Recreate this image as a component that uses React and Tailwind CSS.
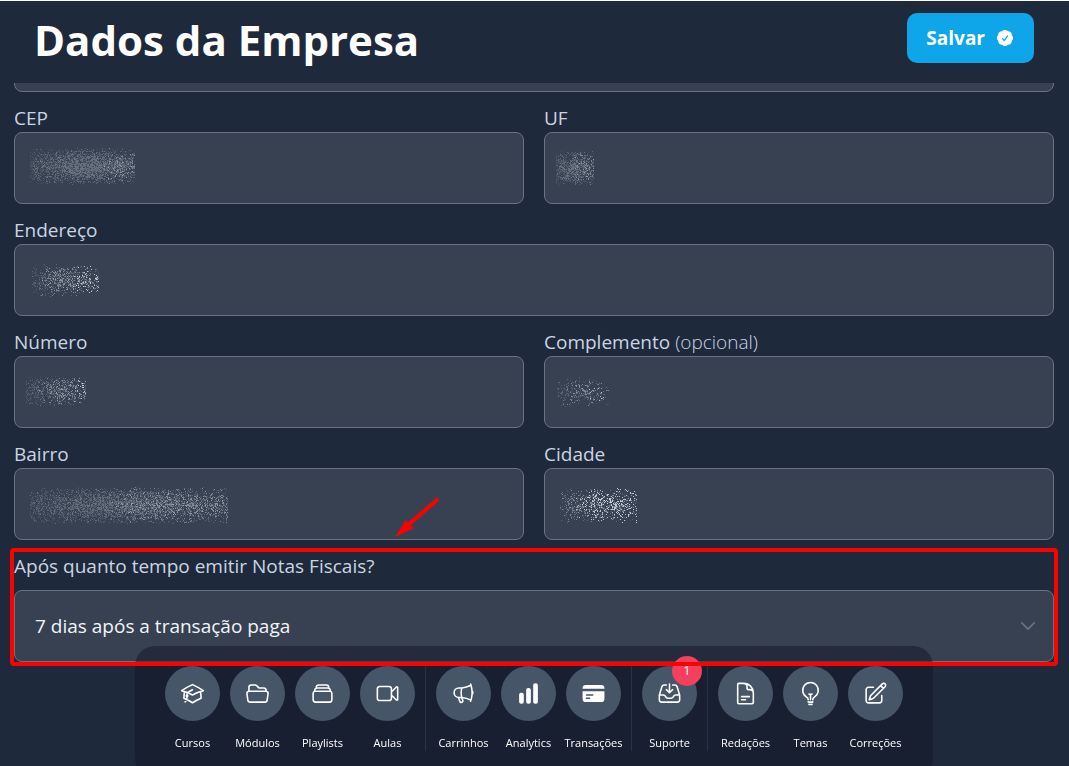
import {
  HiChartBar,
  HiCheckBadge,
  HiCreditCard,
  HiOutlineAcademicCap,
  HiOutlineChevronDown,
  HiOutlineDocumentText,
  HiOutlineFolderOpen,
  HiOutlineInboxArrowDown,
  HiOutlineLightBulb,
  HiOutlineMegaphone,
  HiOutlinePencilSquare,
  HiOutlineRectangleStack,
  HiOutlineVideoCamera,
} from "react-icons/hi2";

const dockGroups = [
  [
    { label: "Cursos", Icon: HiOutlineAcademicCap },
    { label: "Módulos", Icon: HiOutlineFolderOpen },
    { label: "Playlists", Icon: HiOutlineRectangleStack },
    { label: "Aulas", Icon: HiOutlineVideoCamera },
  ],
  [
    { label: "Carrinhos", Icon: HiOutlineMegaphone },
    { label: "Analytics", Icon: HiChartBar },
    { label: "Transações", Icon: HiCreditCard },
  ],
  [{ label: "Suporte", Icon: HiOutlineInboxArrowDown, badge: 1 }],
  [
    { label: "Redações", Icon: HiOutlineDocumentText },
    { label: "Temas", Icon: HiOutlineLightBulb },
    { label: "Correções", Icon: HiOutlinePencilSquare },
  ],
];

const fieldClass =
  "block h-[72px] w-full rounded-lg border border-[#6b7280] bg-[#384151] px-5 text-[19px] text-[#f1f5f9] outline-none";

// Scatters 1px specks that hide a private value; density falls off towards the edges.
function specks({ w, h, count, seed, bright }) {
  let s = seed;
  const rand = () => {
    s = (s * 1664525 + 1013904223) % 4294967296;
    return s / 4294967296;
  };
  const levels = ["", "", "", ""];
  for (let i = 0; i < count; i++) {
    const along = rand() < 0.5 ? rand() : (rand() + rand()) / 2;
    const x = Math.floor(along * w);
    const y = Math.floor(((rand() + rand()) / 2) * h);
    const lit = rand() * (0.45 + (0.55 * x) / w) * bright;
    const level = Math.min(3, Math.floor(lit * 4));
    levels[level] += `M${x} ${y}h1v1h-1z`;
  }
  return levels;
}

const opacities = [0.1, 0.22, 0.42, 0.8];

function Redaction({ noise }) {
  return (
    <svg
      aria-hidden="true"
      width={noise.w}
      height={noise.h}
      shapeRendering="crispEdges"
      className="pointer-events-none absolute"
      style={{ left: noise.x, top: noise.y }}
    >
      {specks(noise).map((d, i) => (
        <path key={i} d={d} fill="#dbe4ea" fillOpacity={opacities[i]} />
      ))}
    </svg>
  );
}

function Field({ id, label, hint, noise, wide }) {
  return (
    <div className={wide ? "col-span-2" : ""}>
      <label htmlFor={id} className="block text-[19px] leading-7 text-[#cbd5e1]">
        {label}
        {hint && <span className="font-light"> {hint}</span>}
      </label>
      <div className="relative">
        <input id={id} type="text" className={fieldClass} />
        <Redaction noise={noise} />
      </div>
    </div>
  );
}

function DockItem({ label, Icon, badge }) {
  return (
    <a href="#" className="flex w-[55px] flex-col items-center gap-[14px]">
      <span className="relative flex size-[55px] items-center justify-center rounded-full bg-[#475569]">
        <Icon className="size-[25px]" />
        {badge && (
          <span className="absolute -top-[10px] -right-[5px] flex size-[30px] items-center justify-center rounded-full bg-[#f43f5e] text-xs">
            {badge}
          </span>
        )}
      </span>
      <span className="text-[11px] leading-4 whitespace-nowrap">{label}</span>
    </a>
  );
}

export default function App() {
  return (
    <div className="h-screen overflow-hidden border-t border-white bg-[#1e293b] font-['Open_Sans',sans-serif]">
      <header className="relative z-10 flex h-[82px] items-center justify-between bg-[#1e293b] pr-[35px] pl-[34px] pb-2">
        <h1 className="pt-1 text-[42px] leading-none font-bold text-white">Dados da Empresa</h1>
        <button
          type="button"
          className="flex h-[50px] items-center gap-[10px] rounded-[10px] bg-[#0ea5e9] px-[19px] text-[19px] font-bold text-white"
        >
          Salvar
          <HiCheckBadge className="size-5" />
        </button>
      </header>

      <form className="-mt-[63px] grid grid-cols-2 gap-x-5 gap-y-3 pr-[15px] pl-[14px]">
        <input type="text" aria-label="E-mail" className={`${fieldClass} col-span-2`} />
        <Field id="cep" label="CEP" noise={{ x: 16, y: 16, w: 105, h: 37, count: 4200, seed: 11, bright: 0.6 }} />
        <Field id="uf" label="UF" noise={{ x: 12, y: 19, w: 38, h: 35, count: 1200, seed: 23, bright: 0.7 }} />
        <Field
          id="endereco"
          label="Endereço"
          wide
          noise={{ x: 18, y: 20, w: 67, h: 33, count: 1000, seed: 37, bright: 1 }}
        />
        <Field id="numero" label="Número" noise={{ x: 12, y: 20, w: 60, h: 30, count: 850, seed: 41, bright: 0.9 }} />
        <Field
          id="complemento"
          label="Complemento"
          hint="(opcional)"
          noise={{ x: 13, y: 21, w: 52, h: 31, count: 380, seed: 53, bright: 1 }}
        />
        <Field id="bairro" label="Bairro" noise={{ x: 16, y: 19, w: 198, h: 37, count: 5600, seed: 67, bright: 0.75 }} />
        <Field id="cidade" label="Cidade" noise={{ x: 16, y: 20, w: 77, h: 35, count: 1100, seed: 79, bright: 1.4 }} />

        <div className="relative col-span-2">
          <label htmlFor="prazo" className="mb-[10px] block text-[19px] leading-7 text-[#cbd5e1]">
            Após quanto tempo emitir Notas Fiscais?
          </label>
          <div className="relative">
            <select id="prazo" className={`${fieldClass} appearance-none`}>
              <option>7 dias após a transação paga</option>
            </select>
            <HiOutlineChevronDown
              strokeWidth={2}
              className="pointer-events-none absolute top-[26px] right-4 size-5 text-[#6b7280]"
            />
          </div>
          <div className="pointer-events-none absolute -inset-1 z-20 rounded-sm border-4 border-[#ff0000]" />
          <svg
            aria-hidden="true"
            width="48"
            height="44"
            viewBox="0 0 48 44"
            className="pointer-events-none absolute -top-14 left-[380px] z-20"
          >
            <path d="M43 4 14 29" stroke="#ff0000" strokeWidth="4" strokeLinecap="round" />
            <path d="M1 41 12 24 15 28 20 32Z" fill="#ff0000" />
          </svg>
        </div>
      </form>

      <div className="fixed inset-x-0 -bottom-3 z-10 flex justify-center pr-px">
        <nav className="flex gap-[10px] rounded-[20px] bg-[#121527]/50 px-[30px] pt-5 pb-[27px] text-white">
          {dockGroups.map((group, i) => (
            <div key={group[0].label} className="flex gap-[10px]">
              {i > 0 && <span className="w-px bg-[#334155]/60" />}
              {group.map((item) => (
                <DockItem key={item.label} {...item} />
              ))}
            </div>
          ))}
        </nav>
      </div>
    </div>
  );
}
